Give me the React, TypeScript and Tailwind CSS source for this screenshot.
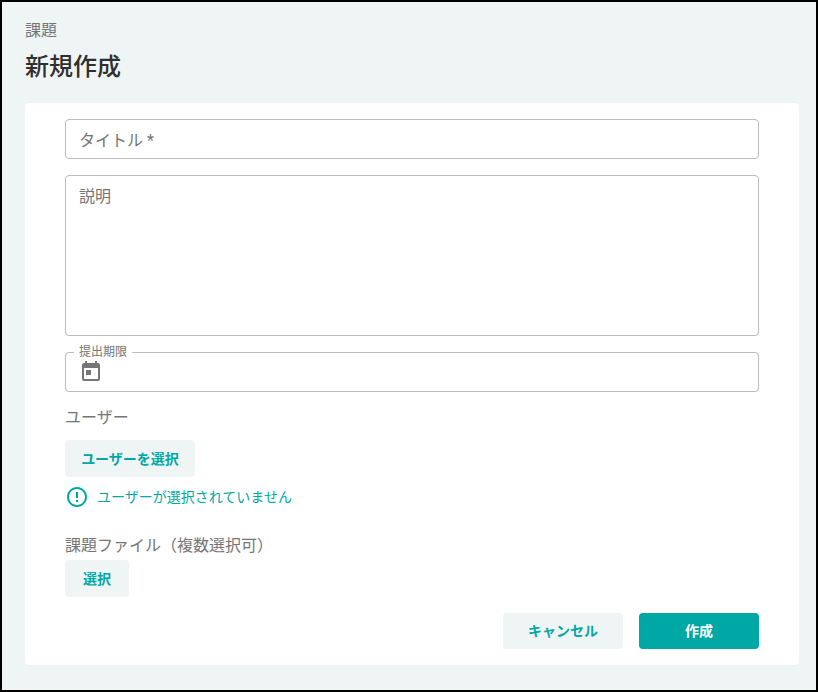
const font = { fontFamily: 'Roboto, "Noto Sans CJK JP", sans-serif' }

function CalendarIcon() {
  return (
    <svg width="24" height="24" viewBox="0 0 24 24" fill="#757575">
      <path d="M19 3h-1V1h-2v2H8V1H6v2H5c-1.11 0-1.99.9-1.99 2L3 19c0 1.1.89 2 2 2h14c1.1 0 2-.9 2-2V5c0-1.1-.9-2-2-2zm0 16H5V8h14v11zM7 10h5v5H7z" />
    </svg>
  )
}

function AlertIcon() {
  return (
    <svg width="24" height="24" viewBox="0 0 24 24" fill="#00a8a5">
      <path d="M11 15h2v2h-2zm0-8h2v6h-2zm.99-5C6.47 2 2 6.48 2 12s4.47 10 9.99 10C17.52 22 22 17.52 22 12S17.52 2 11.99 2zM12 20c-4.42 0-8-3.58-8-8s3.58-8 8-8 8 3.58 8 8-3.58 8-8 8z" />
    </svg>
  )
}

export default function App() {
  return (
    <div
      className="h-[692px] w-[818px] border-2 border-black bg-[#eff4f5] pl-[23px] pr-[17px] pt-[19px] text-[#757575]"
      style={font}
    >
      <p className="h-[20px] text-base leading-[20px]">課題</p>
      <h1 className="mt-[10px] h-[32px] text-2xl font-medium leading-[32px] text-[#2f2f2f]">新規作成</h1>
      <div className="mt-[20px] h-[562px] rounded bg-white px-[40px] pt-[16px]">
        <div className="flex h-[40px] items-center rounded border border-[#bdbdbd] px-[13px] pt-[3px] text-base">タイトル *</div>
        <div className="mt-[16px] h-[161px] rounded border border-[#bdbdbd] px-[13px] pt-[9px] text-base leading-[24px]">説明</div>
        <div className="relative mt-[16px] flex h-[40px] items-center rounded border border-[#bdbdbd] px-[13px]">
          <span className="absolute -top-[8px] left-[8px] bg-white px-[5px] text-xs leading-[14px]">提出期限</span>
          <CalendarIcon />
        </div>
        <p className="mt-[15px] h-[22px] text-base leading-[22px]">ユーザー</p>
        <button className="mt-[11px] block h-[37px] w-[130px] rounded bg-[#eff4f5] text-sm font-bold text-[#00a8a5]">
          ユーザーを選択
        </button>
        <div className="mt-[8px] flex h-[24px] items-center gap-[8px] text-sm text-[#00a8a5]">
          <AlertIcon />
          <span>ユーザーが選択されていません</span>
        </div>
        <p className="mt-[26px] h-[22px] text-base leading-[22px]">課題ファイル（複数選択可）</p>
        <button className="mt-[3px] block h-[37px] w-[64px] rounded bg-[#eff4f5] text-sm font-bold text-[#00a8a5]">
          選択
        </button>
        <div className="mt-[16px] flex justify-end gap-[16px]">
          <button className="h-[36px] w-[120px] rounded bg-[#eff4f5] text-sm font-bold text-[#00a8a5]">キャンセル</button>
          <button className="h-[36px] w-[120px] rounded bg-[#00a8a5] text-sm font-bold text-white">作成</button>
        </div>
      </div>
    </div>
  )
}
